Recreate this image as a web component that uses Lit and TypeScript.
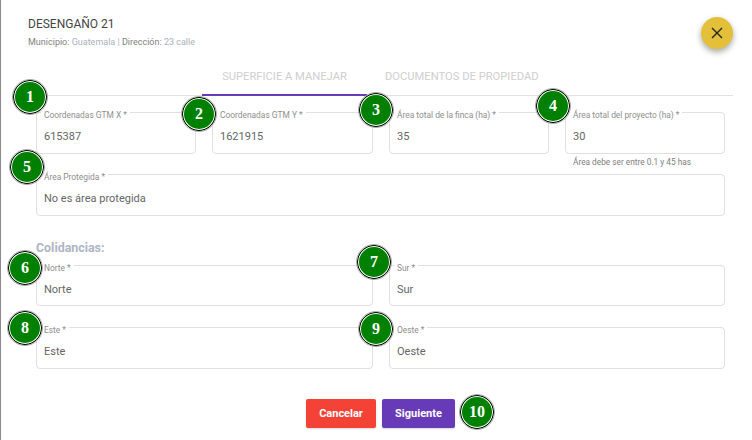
import { LitElement, html, css } from "lit";
import { customElement } from "lit/decorators.js";

const badges: [string, number, number][] = [
  ["1", 30, 97], ["2", 199, 114], ["3", 376, 110], ["4", 553, 106], ["5", 27, 167],
  ["6", 25, 268], ["7", 374, 262], ["8", 25, 328], ["9", 376, 329], ["10", 477, 412],
];

@customElement("app-root")
export class AppRoot extends LitElement {
  static styles = css`
    :host { display: block; width: 752px; height: 440px; background: #fff; font-family: Roboto, "Liberation Sans", sans-serif; color: #444; position: relative; overflow: hidden; }
    .page { height: 440px; box-sizing: border-box; border-left: 1px solid #8a8a8a; padding: 17px 27px 0 35px; display: flex; flex-direction: column; }
    .head { margin-left: -8px; height: 47px; }
    .title { font-size: 12px; line-height: 15px; color: #444; }
    .sub { font-size: 9px; line-height: 11px; margin-top: 5px; color: #808080; }
    .sub span { color: #a9b1bc; }
    .tabs { display: flex; margin-right: -8px; height: 32px; border-bottom: 1px solid #e2e2e2; padding-left: 166px; box-sizing: border-box; }
    .tab { font-size: 11.2px; line-height: 12px; color: #cfcfcf; padding: 7px 18px 0; height: 32px; box-sizing: border-box; text-align: center; white-space: nowrap; }
    .tab.active { width: 165px; border-bottom: 2px solid #673ab7; padding-left: 0; padding-right: 0; }
    .grid { display: grid; gap: 16px; }
    .four { grid-template-columns: 160px 161px 160px 160px; margin-top: 16px; }
    .two { grid-template-columns: 337px 336px; }
    .gap { margin-top: 21px; }
    .field { position: relative; box-sizing: border-box; border: 1px solid #e0e0e0; border-radius: 4px; padding: 0 7px; display: flex; align-items: center; font-size: 11px; color: #666; }
    .field label { position: absolute; top: -3px; left: 4px; padding: 0 3px; background: #fff; font-size: 8.4px; line-height: 10px; color: #8e8e8e; white-space: nowrap; }
    .field .v { padding-top: 7px; }
    .h42 { height: 42px; } .h41 { height: 41px; }
    .hint { height: 20px; font-size: 8.3px; line-height: 10px; color: #808080; padding: 3px 0 0 537px; box-sizing: border-box; white-space: nowrap; }
    h3 { margin: 25px 0 0; height: 24px; font-size: 12.4px; line-height: 14px; font-weight: 700; color: #adb5c4; }
    .actions { display: flex; justify-content: center; gap: 6px; margin-top: 30px; }
    button { height: 29px; border: 0; border-radius: 2px; color: #fff; font: 700 11px Roboto, sans-serif; padding: 0; box-shadow: 0 1px 2px rgba(0,0,0,.15); }
    .cancel { width: 70px; background: #f44336; }
    .next { width: 73px; background: #673ab7; }
    .close { position: absolute; left: 701px; top: 17px; width: 32px; height: 32px; border-radius: 50%; background: #e4c03a; box-shadow: 0 3px 6px rgba(0,0,0,.35); display: flex; align-items: center; justify-content: center; }
    .badge { position: absolute; width: 34px; height: 34px; margin: -17px 0 0 -17px; box-sizing: border-box; border-radius: 50%; background: #008000; border: 1.5px solid #000; outline: 1px solid #aaa; box-shadow: inset 0 0 0 1px #fff; color: #fff; font: 700 16px/31px "Liberation Serif", serif; text-align: center; }
  `;

  private field(label: string, value: string, cls = "h42") {
    return html`<div class="field ${cls}"><label>${label}</label><span class="v">${value}</span></div>`;
  }

  render() {
    return html`
      <div class="page">
        <div class="head">
          <div class="title">DESENGAÑO 21</div>
          <div class="sub">Municipio: <span>Guatemala |</span> Dirección: <span>23 calle</span></div>
        </div>
        <div class="tabs">
          <div class="tab active">SUPERFICIE A MANEJAR</div>
          <div class="tab">DOCUMENTOS DE PROPIEDAD</div>
        </div>
        <div class="grid four">
          ${this.field("Coordenadas GTM X *", "615387")}
          ${this.field("Coordenadas GTM Y *", "1621915")}
          ${this.field("Área total de la finca (ha) *", "35")}
          ${this.field("Área total del proyecto (ha) *", "30")}
        </div>
        <div class="hint">Área debe ser entre 0.1 y 45 has</div>
        ${this.field("Área Protegida *", "No es área protegida")}
        <h3>Colidancias:</h3>
        <div class="grid two">
          ${this.field("Norte *", "Norte", "h41")}
          ${this.field("Sur *", "Sur", "h41")}
        </div>
        <div class="grid two gap">
          ${this.field("Este *", "Este")}
          ${this.field("Oeste *", "Oeste")}
        </div>
        <div class="actions">
          <button class="cancel">Cancelar</button>
          <button class="next">Siguiente</button>
        </div>
      </div>
      <div class="close">
        <svg width="12" height="12" viewBox="0 0 12 12"><path d="M1 1l10 10M11 1L1 11" stroke="#222" stroke-width="1.4" fill="none"/></svg>
      </div>
      ${badges.map(([n, x, y]) => html`<div class="badge" style="left:${x}px;top:${y}px">${n}</div>`)}
    `;
  }
}
